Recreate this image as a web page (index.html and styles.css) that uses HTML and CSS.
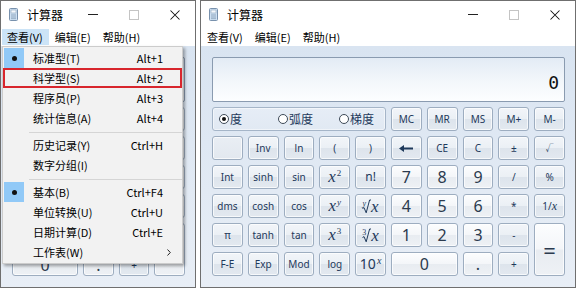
FILE: index.html
```html
<!DOCTYPE html>
<html lang="zh">
<head>
<meta charset="utf-8">
<title>计算器</title>
<link rel="stylesheet" href="styles.css">
</head>
<body>
<div class="screen">
  <div class="win win-std">
    <div class="titlebar">
      <svg class="appicon" width="9" height="13" viewBox="0 0 9 13"><rect x="0.5" y="0.5" width="8" height="12" rx="1" fill="#cfe1f3" stroke="#7891ad"/><rect x="2" y="2" width="5" height="3" fill="#f4f8fc" stroke="#8ea5bd" stroke-width="0.6"/><rect x="2" y="6.5" width="5" height="1" fill="#8ea5bd"/><rect x="2" y="8.5" width="5" height="1" fill="#8ea5bd"/><rect x="2" y="10.3" width="5" height="0.8" fill="#8ea5bd"/></svg>
      <span class="title">计算器</span>
      <div class="controls">
        <span class="ctl"><span class="g-min"></span></span>
        <span class="ctl"><span class="g-max"></span></span>
        <span class="ctl"><svg width="10" height="10" viewBox="0 0 10 10"><path d="M0.5 0.5L9.5 9.5M9.5 0.5L0.5 9.5" stroke="#111" stroke-width="1.05" fill="none"/></svg></span>
      </div>
    </div>
    <div class="menubar">
      <span class="mi active">查看(V)</span><span class="mi">编辑(E)</span><span class="mi">帮助(H)</span>
    </div>
    <div class="calbody">
      <div class="display"></div>
      <div class="keys keys5">
        <div class="k"></div><div class="k"></div><div class="k"></div><div class="k"></div><div class="k"></div>
        <div class="k"></div><div class="k"></div><div class="k"></div><div class="k"></div><div class="k"></div>
        <div class="k dg"></div><div class="k dg"></div><div class="k dg"></div><div class="k"></div><div class="k"></div>
        <div class="k dg"></div><div class="k dg"></div><div class="k dg"></div><div class="k"></div><div class="k"></div>
        <div class="k dg"></div><div class="k dg"></div><div class="k dg"></div><div class="k"></div><div class="k dg eq"></div>
        <div class="k dg span2 low">0</div><div class="k dg low">.</div><div class="k low">+</div>
      </div>
    </div>
    <div class="dropdown">
      <div class="item"><span class="bul on"><span class="dot"></span></span><span class="lbl">标准型(T)</span><span class="sc">Alt+1</span></div>
      <div class="item marked"><span class="bul"></span><span class="lbl">科学型(S)</span><span class="sc">Alt+2</span></div>
      <div class="item"><span class="bul"></span><span class="lbl">程序员(P)</span><span class="sc">Alt+3</span></div>
      <div class="item"><span class="bul"></span><span class="lbl">统计信息(A)</span><span class="sc">Alt+4</span></div>
      <div class="sep"></div>
      <div class="item"><span class="bul"></span><span class="lbl">历史记录(Y)</span><span class="sc">Ctrl+H</span></div>
      <div class="item"><span class="bul"></span><span class="lbl">数字分组(I)</span></div>
      <div class="sep"></div>
      <div class="item"><span class="bul on"><span class="dot"></span></span><span class="lbl">基本(B)</span><span class="sc">Ctrl+F4</span></div>
      <div class="item"><span class="bul"></span><span class="lbl">单位转换(U)</span><span class="sc">Ctrl+U</span></div>
      <div class="item"><span class="bul"></span><span class="lbl">日期计算(D)</span><span class="sc">Ctrl+E</span></div>
      <div class="item"><span class="bul"></span><span class="lbl">工作表(W)</span><svg class="arrow" width="4" height="7" viewBox="0 0 4 7"><path d="M0.5 0.5L3.3 3.5L0.5 6.5" stroke="#222" stroke-width="1" fill="none"/></svg></div>
    </div>
  </div>

  <div class="win win-sci">
    <div class="titlebar">
      <svg class="appicon" width="9" height="13" viewBox="0 0 9 13"><rect x="0.5" y="0.5" width="8" height="12" rx="1" fill="#cfe1f3" stroke="#7891ad"/><rect x="2" y="2" width="5" height="3" fill="#f4f8fc" stroke="#8ea5bd" stroke-width="0.6"/><rect x="2" y="6.5" width="5" height="1" fill="#8ea5bd"/><rect x="2" y="8.5" width="5" height="1" fill="#8ea5bd"/><rect x="2" y="10.3" width="5" height="0.8" fill="#8ea5bd"/></svg>
      <span class="title">计算器</span>
      <div class="controls">
        <span class="ctl"><span class="g-min"></span></span>
        <span class="ctl"><span class="g-max"></span></span>
        <span class="ctl"><svg width="10" height="10" viewBox="0 0 10 10"><path d="M0.5 0.5L9.5 9.5M9.5 0.5L0.5 9.5" stroke="#111" stroke-width="1.05" fill="none"/></svg></span>
      </div>
    </div>
    <div class="menubar">
      <span class="mi">查看(V)</span><span class="mi">编辑(E)</span><span class="mi">帮助(H)</span>
    </div>
    <div class="calbody">
      <div class="display"><span class="num">0</span></div>
      <div class="keys keys10">
        <div class="radios">
          <span class="radio r1"><span class="circ on"></span>度</span>
          <span class="radio r2"><span class="circ"></span>弧度</span>
          <span class="radio"><span class="circ"></span>梯度</span>
        </div>
        <div class="k">MC</div><div class="k">MR</div><div class="k">MS</div><div class="k">M+</div><div class="k">M-</div>

        <div class="k blank"></div><div class="k">Inv</div><div class="k">ln</div><div class="k">(</div><div class="k">)</div>
        <div class="k"><svg width="14" height="7" viewBox="0 0 14 7"><path d="M0 3.5L5 0V7Z" fill="#1e395b"/><rect x="4" y="2.5" width="10" height="2" fill="#1e395b"/></svg></div><div class="k">CE</div><div class="k">C</div><div class="k">±</div><div class="k sm">√</div>

        <div class="k">Int</div><div class="k">sinh</div><div class="k">sin</div><div class="k math"><span class="m"><i>x</i><sup>2</sup></span></div><div class="k nf">n!</div>
        <div class="k dg">7</div><div class="k dg">8</div><div class="k dg">9</div><div class="k">/</div><div class="k">%</div>

        <div class="k">dms</div><div class="k">cosh</div><div class="k">cos</div><div class="k math"><span class="m"><i>x</i><sup><i>y</i></sup></span></div><div class="k math"><span class="rt"><span class="idx"><i>y</i></span><svg width="9" height="15" viewBox="0 0 9 15"><path d="M0.5 9.5L2 8.6L4.2 13.8L7.6 1H9" stroke="#1e395b" stroke-width="1" fill="none"/></svg></span><i>x</i></div>
        <div class="k dg">4</div><div class="k dg">5</div><div class="k dg">6</div><div class="k">*</div><div class="k"><span class="m">1/<i class="vx">x</i></span></div>

        <div class="k">π</div><div class="k">tanh</div><div class="k">tan</div><div class="k math"><span class="m"><i>x</i><sup>3</sup></span></div><div class="k math"><span class="rt"><span class="idx">3</span><svg width="9" height="15" viewBox="0 0 9 15"><path d="M0.5 9.5L2 8.6L4.2 13.8L7.6 1H9" stroke="#1e395b" stroke-width="1" fill="none"/></svg></span><i>x</i></div>
        <div class="k dg">1</div><div class="k dg">2</div><div class="k dg">3</div><div class="k">-</div><div class="k dg eq">=</div>

        <div class="k">F-E</div><div class="k">Exp</div><div class="k">Mod</div><div class="k">log</div><div class="k ten"><span class="m">10<sup><i>x</i></sup></span></div>
        <div class="k dg span2">0</div><div class="k dg">.</div><div class="k">+</div>
      </div>
    </div>
  </div>
</div>
</body>
</html>
```

FILE: styles.css
```css
html, body {
  margin: 0;
  padding: 0;
  background: #ffffff;
}
body {
  font-family: "Noto Sans", "Noto Sans CJK SC", sans-serif;
  color: #000;
}
.screen {
  display: flex;
  gap: 4px;
  height: 288px;
}
.win {
  position: relative;
  box-sizing: border-box;
  border: 1px solid #6f6f6f;
  background: #ffffff;
  display: flex;
  flex-direction: column;
}
.win-std { width: 196px; }
.win-sci { width: 376px; }

.titlebar {
  height: 27px;
  display: flex;
  align-items: center;
  padding-left: 8px;
}
.appicon { margin-right: 9px; flex: none; }
.title {
  font-family: "Noto Sans CJK SC", sans-serif;
  font-size: 12px;
  line-height: 14px;
}
.controls {
  margin-left: auto;
  display: flex;
  height: 27px;
}
.ctl {
  width: 41px;
  display: flex;
  align-items: center;
  justify-content: center;
}
.g-min {
  width: 10px;
  height: 1px;
  background: #222;
}
.g-max {
  width: 8px;
  height: 8px;
  border: 1px solid #c4c4c4;
}

.menubar {
  height: 18px;
  box-sizing: border-box;
  padding: 1px 1px;
  display: flex;
}
.mi {
  font-family: "Noto Sans CJK SC", sans-serif;
  font-size: 11px;
  line-height: 16px;
  padding: 0 6px 0 5px;
  margin-right: 1px;
}
.mi.active { background: #cce4f7; }

.calbody {
  flex: 1;
  padding: 11px 10px 10px 11px;
  background: linear-gradient(180deg, #d9e4f1 0%, #e2eaf4 60%, #e8eef6 100%);
}
.display {
  box-sizing: border-box;
  height: 45px;
  margin-bottom: 5px;
  border: 1px solid #8a9bb0;
  border-radius: 2px;
  background: linear-gradient(180deg, #e3ebf5 0%, #f3f7fb 55%, #fdfeff 100%);
  display: flex;
  align-items: flex-end;
  justify-content: flex-end;
  padding: 0 5px 9px 0;
}
.num {
  font-family: "DejaVu Sans Mono", monospace;
  font-size: 18px;
  line-height: 18px;
  color: #111;
}

.keys {
  display: grid;
  grid-auto-rows: 24px;
  gap: 5px;
}
.keys5 { grid-template-columns: repeat(5, 1fr); }
.keys10 { grid-template-columns: repeat(10, 1fr); }

.k {
  box-sizing: border-box;
  display: flex;
  align-items: center;
  justify-content: center;
  border: 1px solid #9dadc0;
  border-radius: 3px;
  box-shadow: inset 0 0 0 1px rgba(255, 255, 255, 0.7);
  background: linear-gradient(180deg, #f2f5f9 0%, #ebf0f5 48%, #dde4ec 52%, #e3e9f0 100%);
  color: #1e395b;
  font-size: 10px;
  line-height: 1;
  white-space: nowrap;
}
.k.dg {
  background: linear-gradient(180deg, #fcfdfe 0%, #f4f6f9 48%, #e8ecf1 52%, #eef1f5 100%);
  font-size: 16px;
  line-height: 12px;
  color: #2b3a4e;
}
.k.low { align-items: flex-end; padding-bottom: 5px; line-height: 10px; }
.k.eq { grid-row: span 2; font-size: 22px; }
.k.span2 { grid-column: span 2; }
.k.blank { background: linear-gradient(180deg, #e9eef4 0%, #e2e8ef 100%); }
.k.nf { font-size: 12px; }
.k.sm { font-size: 8px; }
.m { line-height: 16px; }
.m sup {
  position: relative;
  top: -6px;
  vertical-align: baseline;
  line-height: 0;
  margin-left: 1px;
}
.vx {
  font-family: "Liberation Serif", serif;
  font-size: 12px;
}
.k.math {
  font-family: "Liberation Serif", serif;
  font-size: 17px;
}
.k.math sup {
  font-size: 9px;
}
.rt {
  display: inline-flex;
  align-items: flex-start;
  margin-right: 0;
}
.rt svg { margin-top: 1px; }
.idx {
  font-size: 8px;
  line-height: 8px;
  margin-top: 2px;
  margin-right: -4px;
}
.k.ten {
  font-size: 14px;
}
.k.ten sup { font-family: "Liberation Serif", serif; font-size: 10px; top: -5px; }

.radios {
  grid-column: span 5;
  box-sizing: border-box;
  border: 1px solid #a5b5c8;
  border-radius: 3px;
  background: linear-gradient(180deg, #e6edf6 0%, #e1e9f3 100%);
  box-shadow: inset 0 0 0 1px rgba(255, 255, 255, 0.5);
  display: flex;
  align-items: center;
  padding-left: 6px;
  font-family: "Noto Sans CJK SC", sans-serif;
  font-size: 12px;
  color: #1e395b;
}
.radio {
  display: flex;
  align-items: center;
  line-height: 14px;
}
.radio.r1 { width: 59px; }
.radio.r2 { width: 61px; }
.circ {
  box-sizing: border-box;
  width: 10px;
  height: 10px;
  border: 1px solid #3e4a58;
  border-radius: 50%;
  background: #fff;
  margin-right: 1px;
  display: flex;
  align-items: center;
  justify-content: center;
}
.circ.on::after {
  content: "";
  width: 4px;
  height: 4px;
  border-radius: 50%;
  background: #111;
}

.dropdown {
  position: absolute;
  left: 1px;
  top: 45px;
  width: 181px;
  box-sizing: border-box;
  border: 1px solid #cccccc;
  background: #f2f2f2;
  padding: 1px 0;
  box-shadow: 2px 2px 3px rgba(0, 0, 0, 0.35);
  font-size: 11px;
}
.item {
  height: 20px;
  display: flex;
  align-items: center;
}
.item.marked {
  box-shadow: inset 0 0 0 2px #d8262d;
}
.bul {
  width: 20px;
  height: 20px;
  margin-left: 1px;
  display: flex;
  align-items: center;
  justify-content: center;
  flex: none;
}
.bul.on { background: #91c9f7; }
.dot {
  width: 5px;
  height: 5px;
  border-radius: 50%;
  background: #111;
}
.lbl {
  margin-left: 9px;
  font-family: "Noto Sans CJK SC", sans-serif;
  line-height: 14px;
}
.sc {
  margin-left: auto;
  padding-right: 19px;
  font-family: "Noto Sans CJK SC", sans-serif;
  line-height: 14px;
}
.arrow {
  margin-left: auto;
  margin-right: 11px;
}
.sep {
  height: 1px;
  margin: 4px 0 2px 26px;
  background: #d5d5d5;
}
```
